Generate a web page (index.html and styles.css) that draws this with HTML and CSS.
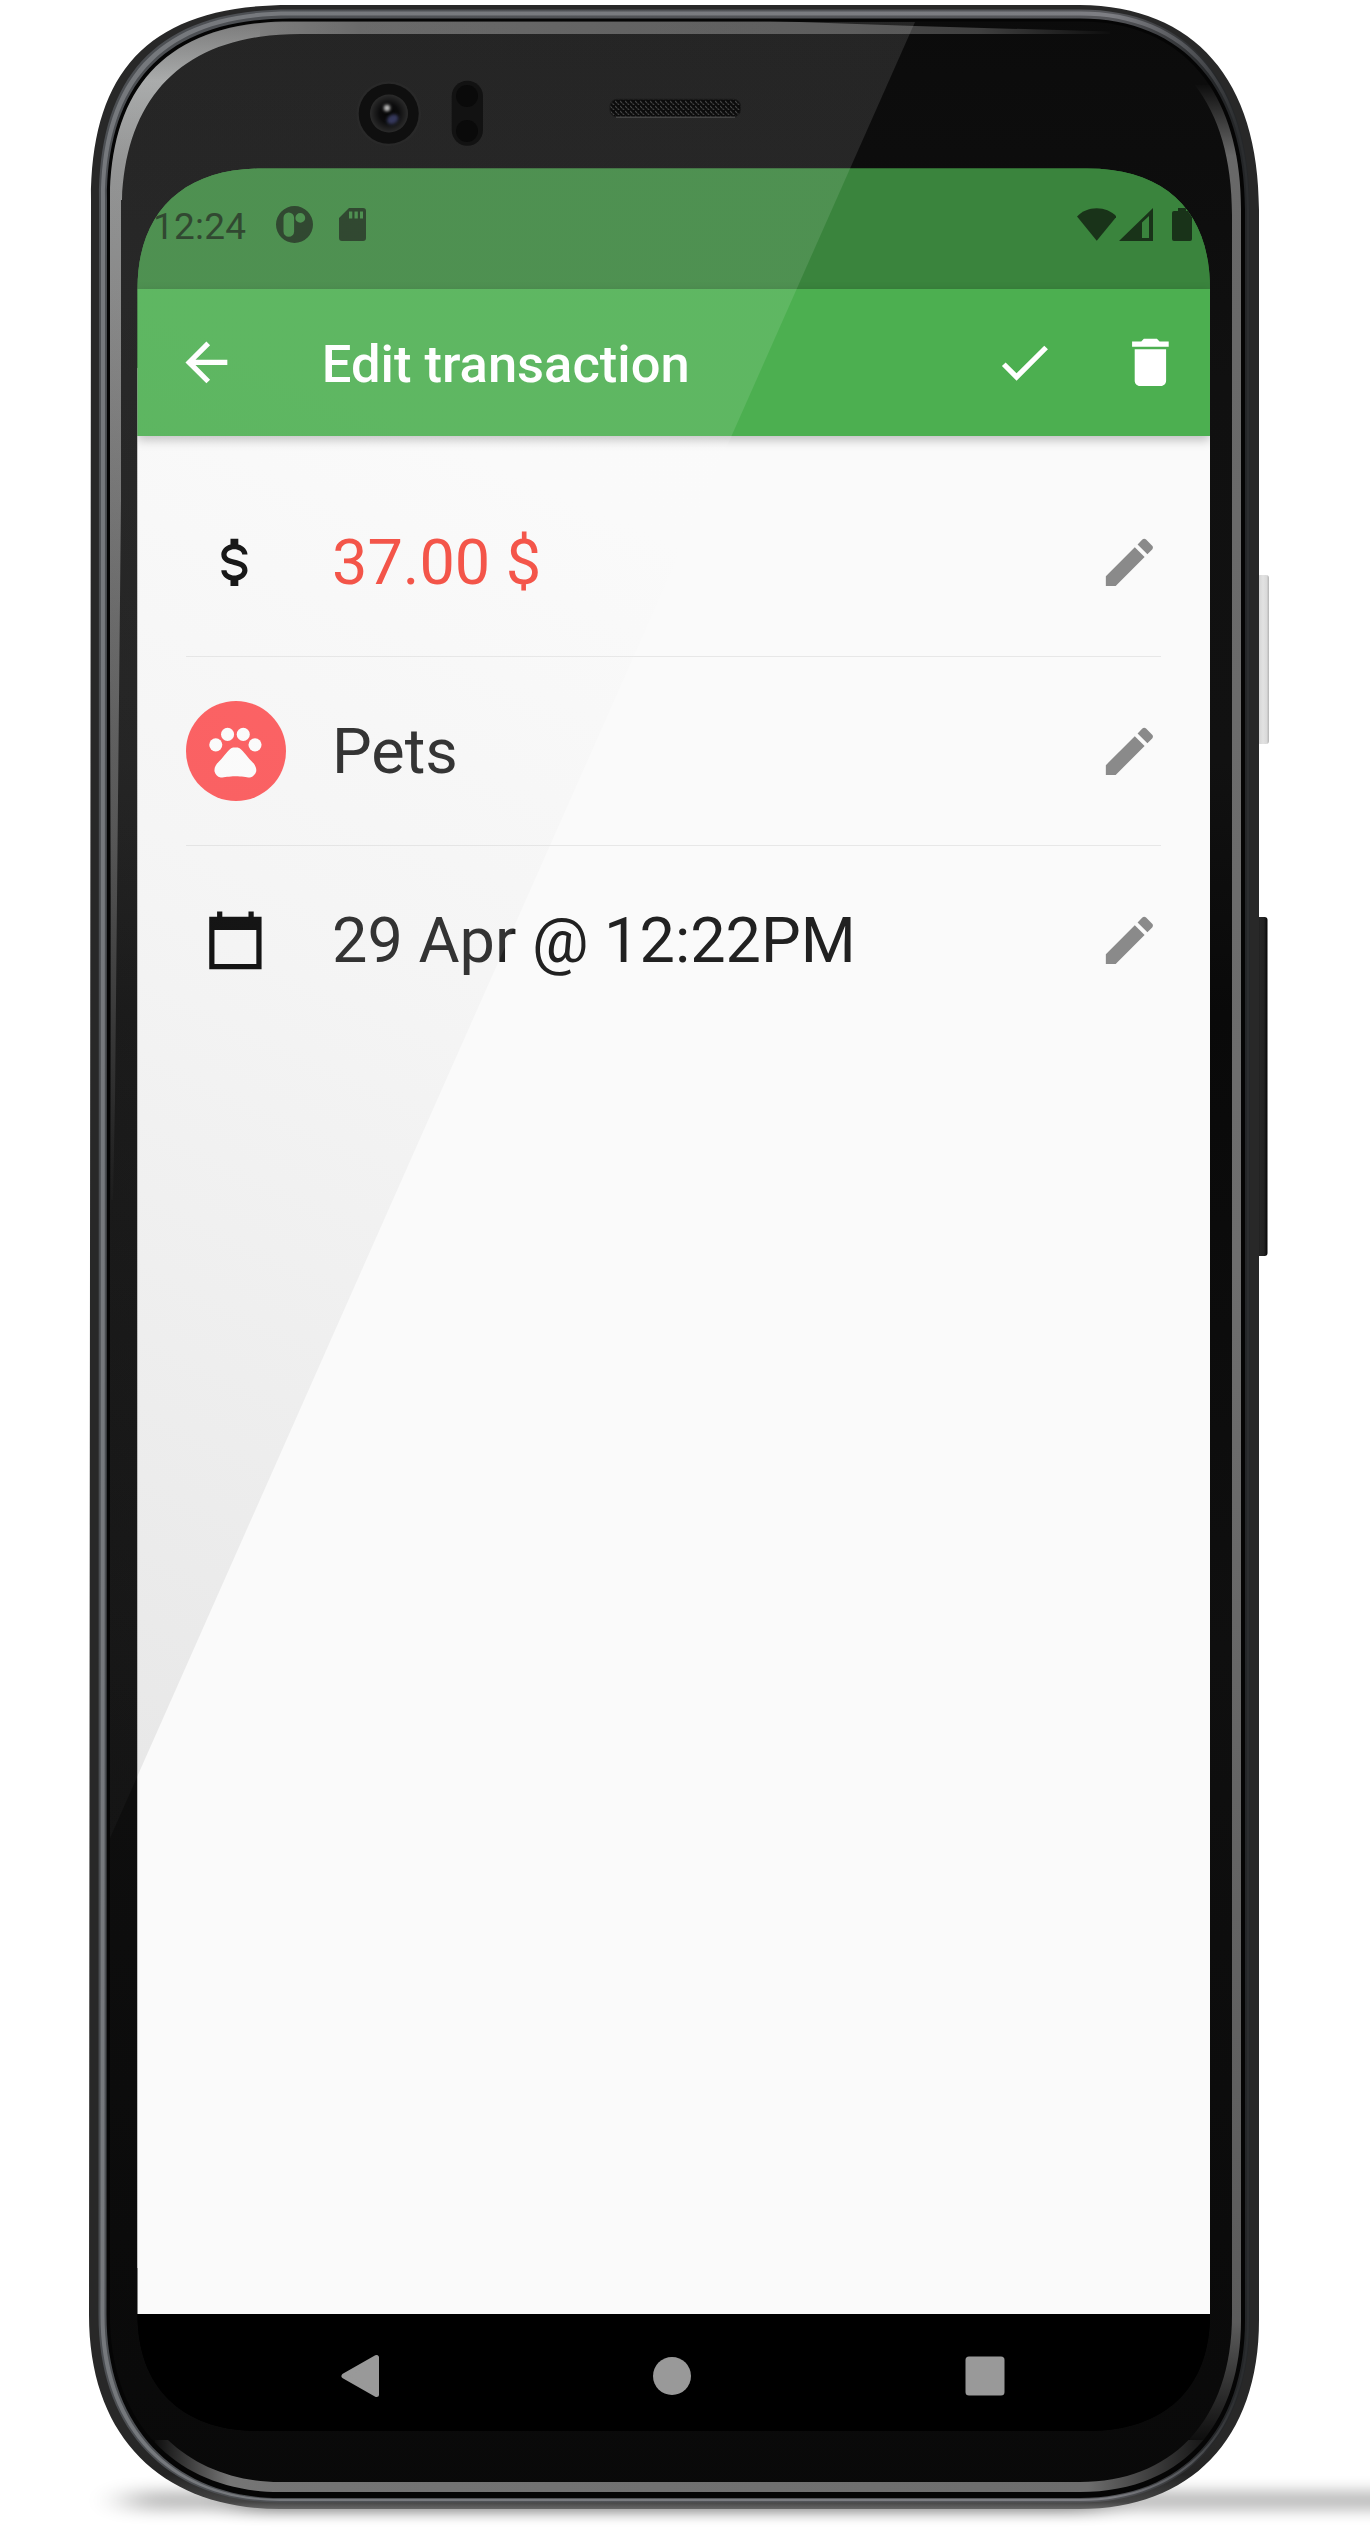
FILE: index.html
```html
<!DOCTYPE html>
<html lang="en">
<head>
<meta charset="utf-8">
<title>Edit transaction</title>
<link rel="stylesheet" href="styles.css">
</head>
<body>
<main class="device">
  <svg class="device-body" viewBox="0 0 1370 2534" aria-hidden="true">
    <defs>
      <filter id="soft" x="-20%" y="-400%" width="140%" height="900%"><feGaussianBlur stdDeviation="20 8"/></filter>
      <filter id="tiny" x="-100%" y="-100%" width="300%" height="300%"><feGaussianBlur stdDeviation="1.5"/></filter>
      <linearGradient id="silver" gradientUnits="userSpaceOnUse" x1="99" y1="0" x2="1250" y2="0">
        <stop offset="0" stop-color="#75787c"/><stop offset=".88" stop-color="#7d7e83"/><stop offset=".95" stop-color="#505256"/><stop offset=".99" stop-color="#2b2d2f"/>
      </linearGradient>
      <linearGradient id="silverEdge" gradientUnits="userSpaceOnUse" x1="99" y1="0" x2="1250" y2="0">
        <stop offset="0" stop-color="#4c4f53"/><stop offset=".88" stop-color="#55565a"/><stop offset=".97" stop-color="#242628"/>
      </linearGradient>
      <linearGradient id="shell" gradientUnits="userSpaceOnUse" x1="0" y1="2440" x2="0" y2="2509">
        <stop offset="0" stop-color="#282828"/><stop offset=".5" stop-color="#242424"/><stop offset=".9" stop-color="#444"/><stop offset="1" stop-color="#686868"/>
      </linearGradient>
      <linearGradient id="rimLeft" gradientUnits="userSpaceOnUse" x1="0" y1="22" x2="0" y2="1200">
        <stop offset="0" stop-color="#6c6c6c"/><stop offset=".05" stop-color="#a0a2a2"/><stop offset=".12" stop-color="#888989"/><stop offset=".35" stop-color="#6e6e6e"/><stop offset=".7" stop-color="#484848"/><stop offset="1" stop-color="#0e0e0e"/>
      </linearGradient>
      <linearGradient id="rimTop" gradientUnits="userSpaceOnUse" x1="230" y1="0" x2="1110" y2="0">
        <stop offset="0" stop-color="#757575"/><stop offset=".15" stop-color="#595959"/><stop offset=".7" stop-color="#4a4a4a"/><stop offset=".85" stop-color="#404040"/><stop offset="1" stop-color="#0e0e0e"/>
      </linearGradient>
      <linearGradient id="rimRight" gradientUnits="userSpaceOnUse" x1="0" y1="85" x2="0" y2="2440">
        <stop offset="0" stop-color="#0e0e0e"/><stop offset=".03" stop-color="#686868"/><stop offset=".5" stop-color="#6e6e6e"/><stop offset=".95" stop-color="#5c5c5c"/><stop offset="1" stop-color="#0e0e0e"/>
      </linearGradient>
      <linearGradient id="rimBottom" gradientUnits="userSpaceOnUse" x1="155" y1="0" x2="1215" y2="0">
        <stop offset="0" stop-color="#0e0e0e"/><stop offset=".07" stop-color="#757575"/><stop offset=".88" stop-color="#6d6d6d"/><stop offset="1" stop-color="#0e0e0e"/>
      </linearGradient>
      <linearGradient id="glassFill" gradientUnits="userSpaceOnUse" x1="0" y1="0" x2="0" y2="2534">
        <stop offset="0" stop-color="#0b0b0b"/><stop offset=".15" stop-color="#101010"/><stop offset=".3" stop-color="#111"/><stop offset=".4" stop-color="#090909"/><stop offset=".65" stop-color="#0f0f0f"/><stop offset="1" stop-color="#090909"/>
      </linearGradient>
      <clipPath id="cLeft"><path d="M100 0H260V200H121V500L118 800L115 1100L113 1200H111V900L109 450H100Z"/></clipPath>
      <clipPath id="cTop"><path d="M260 21H770L915 26L1110 31.500V34L1000 34L770 34.500L400 35L260 40Z"/></clipPath>
      <clipPath id="cRight"><rect x="1190" y="85" width="80" height="2355"/></clipPath>
      <clipPath id="cBottom"><rect x="155" y="2440" width="1060" height="80"/></clipPath>
      <radialGradient id="lens"><stop offset="0" stop-color="#050505"/><stop offset=".5" stop-color="#0c0c0d"/><stop offset="1" stop-color="#2b2b2b"/></radialGradient>
      <pattern id="mesh" width="5" height="5" patternUnits="userSpaceOnUse"><rect width="5" height="5" fill="#0c0c0c"/><path d="M0 1L2 3M2.500 3.500L4.500 5.500" stroke="#444" stroke-width="1.100"/></pattern>
      <linearGradient id="power" x1="0" x2="1" y1="0" y2="0"><stop offset="0" stop-color="#cfcfcf"/><stop offset=".5" stop-color="#e2e2e2"/><stop offset=".8" stop-color="#dadada"/><stop offset="1" stop-color="#b4b4b4"/></linearGradient>
      <linearGradient id="volume" x1="0" x2="1" y1="0" y2="0"><stop offset="0" stop-color="#0b0b0b"/><stop offset=".35" stop-color="#262626"/><stop offset=".7" stop-color="#222"/><stop offset="1" stop-color="#050505"/></linearGradient>
    </defs>
    <rect x="128" y="2492" width="1400" height="17" fill="#000" opacity=".3" filter="url(#soft)"/>
    <rect x="240" y="2496" width="860" height="14" fill="#000" opacity=".4" filter="url(#soft)"/>
    <rect x="1257" y="575" width="12" height="169" rx="3" fill="url(#power)"/>
    <rect x="1256" y="917" width="11.500" height="339" rx="3" fill="url(#volume)"/>
    <path fill="url(#shell)" d="M91 200C91 70 150 5 290 5H1080C1195 6 1259 80 1259 210V2320C1259 2440 1190 2509 1080 2509H280C165 2509 89 2440 89 2315Z"/>
    <path fill="url(#silverEdge)" d="M99 200C99 75 158 9.500 290 9.500H1080C1190 9.500 1250 83 1250 210V2320C1250 2434 1185 2502.500 1080 2502.500H280C172 2502.500 98.500 2434 98.500 2315Z"/>
    <path fill="url(#silver)" d="M101 200C101 77 160 11.500 290 11.500H1080C1189 11.500 1249 84 1249 210V2320C1249 2433 1184 2501 1080 2501H280C173 2501 100.500 2433 100.500 2315Z"/>
    <path fill="url(#silverEdge)" d="M105 200C105 81 164 15.500 290 15.500H1080C1186 15.500 1247 87 1247 210V2320C1247 2431 1183 2499 1080 2499H280C176 2499 104.500 2431 104.500 2315Z"/>
    <path fill="#050505" d="M107 200C107 83 166 18.500 290 18.500H1080C1184 18.500 1245 89 1245 210V2320C1245 2430 1182 2498 1080 2498H280C178 2498 106.500 2430 106.500 2315Z"/>
    <path fill="url(#glassFill)" d="M110 200C110 86 169 21.500 290 21.500H1080C1182 21.500 1241 91 1241 210V2320C1241 2427 1180 2492 1080 2492H280C181 2492 110 2427 110 2315Z"/>
    <g fill-rule="evenodd">
      <path clip-path="url(#cLeft)" fill="url(#rimLeft)" d="M110 200C110 86 169 21.500 290 21.500H1080C1182 21.500 1241 91 1241 210V2320C1241 2427 1180 2492 1080 2492H280C181 2492 110 2427 110 2315ZM122 200C126 96 184 34 300 34H1080C1172 34 1232 96 1232 215V2315C1232 2420 1172 2482 1080 2482H280C190 2482 119 2420 119 2315Z"/>
      <path clip-path="url(#cTop)" fill="url(#rimTop)" d="M110 200C110 86 169 21.500 290 21.500H1120V34H300C184 34 126 96 122 200Z"/>
      <path clip-path="url(#cRight)" fill="url(#rimRight)" d="M110 200C110 86 169 21.500 290 21.500H1080C1182 21.500 1241 91 1241 210V2320C1241 2427 1180 2492 1080 2492H280C181 2492 110 2427 110 2315ZM122 200C126 96 184 34 300 34H1080C1172 34 1232 96 1232 215V2315C1232 2420 1172 2482 1080 2482H280C190 2482 119 2420 119 2315Z"/>
      <path clip-path="url(#cBottom)" fill="url(#rimBottom)" d="M110 200C110 86 169 21.500 290 21.500H1080C1182 21.500 1241 91 1241 210V2320C1241 2427 1180 2492 1080 2492H280C181 2492 110 2427 110 2315ZM122 200C126 96 184 34 300 34H1080C1172 34 1232 96 1232 215V2315C1232 2420 1172 2482 1080 2482H280C190 2482 119 2420 119 2315Z"/>
    </g>
  </svg>

  <div class="screen">
    <header class="status-bar">
      <span class="clock">12:24</span>
      <svg class="status-p" viewBox="0 0 37 37"><path fill-rule="evenodd" d="M18.500 0a18.500 18.500 0 1 0 0 37a18.500 18.500 0 1 0 0-37ZM12.800 6.500a5.300 5.300 0 0 1 5.300 5.300v13.600a5.300 5.300 0 0 1-10.600 0v-13.600a5.300 5.300 0 0 1 5.300-5.300ZM24.300 7a4.900 4.900 0 1 1 0 9.800a4.900 4.900 0 1 1 0-9.800Z"/></svg>
      <svg class="status-sd" viewBox="0 0 27 33"><path fill-rule="evenodd" d="M10 0H24a3 3 0 0 1 3 3V30a3 3 0 0 1-3 3H3a3 3 0 0 1-3-3V10ZM10 3.500v7h3.300v-7ZM15.500 3.500v7h3.300v-7ZM21 3.500v7h3v-7Z"/></svg>
      <span class="spacer"></span>
      <svg class="status-wifi" viewBox="0 0 40 33"><path d="M20 33L0 8.500C5 3 12 0 20 0S35 3 40 8.500Z"/></svg>
      <svg class="status-signal" viewBox="0 0 34 33"><path fill-rule="evenodd" d="M0 33L34 0V33ZM23 14.500V30H30V8Z"/></svg>
      <svg class="status-battery" viewBox="0 0 20 33"><path d="M6 0h8v3h4a2 2 0 0 1 2 2v26a2 2 0 0 1-2 2H2a2 2 0 0 1-2-2V5a2 2 0 0 1 2-2h4Z"/></svg>
    </header>

    <nav class="app-bar">
      <svg class="icon" viewBox="0 0 24 24"><path d="M20 11H7.830l5.590-5.590L12 4l-8 8 8 8 1.410-1.410L7.830 13H20v-2z"/></svg>
      <h1 class="title">Edit transaction</h1>
      <svg class="icon icon-check" viewBox="0 0 24 24"><path d="M9 16.170L4.830 12l-1.420 1.410L9 19 21 7l-1.410-1.410z"/></svg>
      <svg class="icon icon-delete" viewBox="0 0 24 24"><path d="M6 19c0 1.100.9 2 2 2h8c1.100 0 2-.9 2-2V7H6v12zM19 4h-3.500l-1-1h-5l-1 1H5v2h14V4z"/></svg>
    </nav>

    <section class="form">
      <div class="row">
        <span class="lead lead-amount"><svg class="icon" viewBox="0 0 24 24"><path d="M7,15H9C9,16.080 10.370,17 12,17C13.630,17 15,16.080 15,15C15,13.900 13.960,13.500 11.760,12.970C9.640,12.440 7,11.780 7,9C7,7.210 8.470,5.690 10.500,5.180V3H13.500V5.180C15.530,5.690 17,7.210 17,9H15C15,7.920 13.630,7 12,7C10.370,7 9,7.920 9,9C9,10.100 10.040,10.500 12.240,11.030C14.360,11.560 17,12.220 17,15C17,16.790 15.530,18.310 13.500,18.820V21H10.500V18.820C8.470,18.310 7,16.790 7,15Z"/></svg></span>
        <span class="value expense">37.00 $</span>
        <svg class="icon edit" viewBox="0 0 24 24"><path d="M3 17.250V21h3.750L17.810 9.940l-3.750-3.750L3 17.250zM20.710 7.040c.39-.39.39-1.020 0-1.410l-2.340-2.340c-.39-.39-1.020-.39-1.410 0l-1.830 1.830 3.750 3.750 1.830-1.830z"/></svg>
      </div>
      <div class="row">
        <span class="lead lead-category"><svg class="icon" viewBox="0 0 24 24"><circle cx="4.500" cy="9.500" r="2.500"/><circle cx="9" cy="5.500" r="2.500"/><circle cx="15" cy="5.500" r="2.500"/><circle cx="19.500" cy="9.500" r="2.500"/><path d="M17.340 14.860c-.87-1.020-1.600-1.890-2.480-2.910-.46-.54-1.050-1.080-1.750-1.320-.11-.04-.22-.07-.33-.09-.25-.04-.52-.04-.78-.04s-.53 0-.79.05c-.11.02-.22.05-.33.09-.7.24-1.280.78-1.750 1.320-.87 1.020-1.600 1.890-2.480 2.910-1.310 1.310-2.920 2.760-2.620 4.790.29 1.020 1.020 2.030 2.330 2.320.73.15 3.060-.44 5.540-.44h.18c2.480 0 4.810.58 5.540.44 1.310-.29 2.040-1.310 2.330-2.320.31-2.040-1.300-3.490-2.610-4.800z"/></svg></span>
        <span class="value">Pets</span>
        <svg class="icon edit" viewBox="0 0 24 24"><path d="M3 17.250V21h3.750L17.810 9.940l-3.750-3.750L3 17.250zM20.710 7.040c.39-.39.39-1.020 0-1.410l-2.340-2.340c-.39-.39-1.020-.39-1.410 0l-1.830 1.830 3.750 3.750 1.830-1.830z"/></svg>
      </div>
      <div class="row">
        <span class="lead"><svg class="icon" viewBox="0 0 24 24"><path fill-rule="evenodd" d="M22 3h-3V1h-2v2H7V1H5v2H2v20h20V3zM20 21H4V8h16v13z"/></svg></span>
        <span class="value">29 Apr @ 12:22PM</span>
        <svg class="icon edit" viewBox="0 0 24 24"><path d="M3 17.250V21h3.750L17.810 9.940l-3.750-3.750L3 17.250zM20.710 7.040c.39-.39.39-1.020 0-1.410l-2.340-2.340c-.39-.39-1.020-.39-1.410 0l-1.830 1.830 3.750 3.750 1.830-1.830z"/></svg>
      </div>
    </section>

    <footer class="nav-bar">
      <svg class="nav-icon" viewBox="0 0 44 44"><path d="M6 22L38.500 3.500V40.500Z" stroke="#999" stroke-width="5" stroke-linejoin="round"/></svg>
      <svg class="nav-icon" viewBox="0 0 44 44"><circle cx="22" cy="22" r="19"/></svg>
      <svg class="nav-icon" viewBox="0 0 44 44"><rect x="2.500" y="2.500" width="39" height="39" rx="3.500"/></svg>
    </footer>
  </div>

  <svg class="device-glare" viewBox="0 0 1370 2534" aria-hidden="true">
    <defs>
      <linearGradient id="glare" gradientUnits="userSpaceOnUse" x1="915" y1="22" x2="138" y2="1773">
        <stop offset="0" stop-color="#fff"/><stop offset=".3" stop-color="#fafafa"/><stop offset=".56" stop-color="#c8c8c8"/><stop offset="1" stop-color="#4e4e4e"/>
      </linearGradient>
    </defs>
    <path fill="url(#glare)" fill-opacity=".105" d="M915 22H290C169 22 110 86 110 200V1838Z"/>
    <circle cx="388.700" cy="113.700" r="32.500" fill="#292929"/>
    <circle cx="388.700" cy="113.700" r="30" fill="#0f0f0f"/>
    <circle cx="389" cy="113.500" r="19" fill="url(#lens)"/>
    <ellipse cx="392.700" cy="119.300" rx="6" ry="4.500" fill="#34395c" filter="url(#tiny)" transform="rotate(-30 392.700 119.300)"/>
    <circle cx="387" cy="108" r="3.200" fill="#bbb" filter="url(#tiny)"/>
    <rect x="451.700" y="80.700" width="31.300" height="65" rx="15.600" fill="#121212"/>
    <circle cx="467" cy="96" r="11" fill="#0a0a0a"/><circle cx="467" cy="131" r="11" fill="#0a0a0a"/>
    <rect x="610" y="99.300" width="130.500" height="17.600" rx="7" fill="url(#mesh)" stroke="#1a1a1a"/>
    <path d="M616 117.200H735" stroke="#555" stroke-width="1"/>
  </svg>
</main>
</body>
</html>
```
FILE: styles.css
```css
* { box-sizing: border-box; }
body { margin: 0; background: #fff; font-family: Roboto, "Liberation Sans", sans-serif; }
svg { display: block; flex: none; }

.device { position: relative; width: 1370px; height: 2534px; padding: 168px 160px 0 137px; overflow: hidden; }
.device-body, .device-glare { position: absolute; inset: 0; width: 1370px; height: 2534px; }
.device-glare { pointer-events: none; }

.screen {
  position: relative;
  width: 1073px;
  height: 2263px;
  display: flex;
  flex-direction: column;
  background: linear-gradient(#3a843d 0 200px, #fafafa 200px 2100px, #000 2100px);
  clip-path: path("M.5 121C.5 45 45 .5 125 .5H950C1030 .5 1073 45 1073 121V2146C1073 2220 1028 2263 950 2263H122C45 2263 .5 2220 .5 2146Z");
}

.status-bar { height: 121px; flex: none; display: flex; align-items: center; padding: 0 18px 8px 16px; background: #3a843d; color: #193319; fill: #193319; }
.clock { width: 122.700px; font-size: 37px; line-height: 44px; padding-top: 4px; letter-spacing: .2px; }
.status-p { width: 37px; height: 37px; }
.status-sd { width: 27px; height: 33px; margin-left: 26px; }
.spacer { flex: 1; }
.status-wifi { width: 39.500px; height: 33px; }
.status-signal { width: 34px; height: 33px; margin-left: 3px; }
.status-battery { width: 20px; height: 33px; margin-left: 19px; }

.icon { width: 62.800px; height: 62.800px; }

.app-bar { position: relative; height: 147px; flex: none; display: flex; align-items: center; padding: 0 28.500px 0 37.500px; background: #4caf50; color: #fff; fill: #fff; box-shadow: 0 4px 10px rgba(0, 0, 0, .25); }
.title { flex: 1; margin: 0 0 0 84.500px; font-size: 52.500px; font-weight: 500; line-height: 60px; padding-top: 3px; white-space: nowrap; }
.icon-delete { margin-left: 63px; }

.form { flex: 1; padding: 32px 49.500px 0 48.500px; background: #fafafa; }
.row { height: 189px; display: flex; align-items: center; border-bottom: 1px solid #e7e7e7; }
.row:last-child { border-bottom: 0; }
.lead { width: 100px; height: 100px; flex: none; display: flex; align-items: center; justify-content: center; fill: #000; }
.lead-amount { padding-right: 3px; }
.lead-category { border-radius: 50%; background: #ff5456; fill: #fff; }
.value { flex: 1; margin-left: 46.500px; font-size: 63px; line-height: 74px; padding-top: 1px; color: #212121; white-space: nowrap; }
.expense { color: #f44336; }
.edit { fill: #8a8a8a; }

.nav-bar { height: 117px; flex: none; display: flex; align-items: center; justify-content: space-between; padding: 7px 203.500px 0 201px; background: #000; fill: #999; }
.nav-icon { width: 44px; height: 44px; }
```
